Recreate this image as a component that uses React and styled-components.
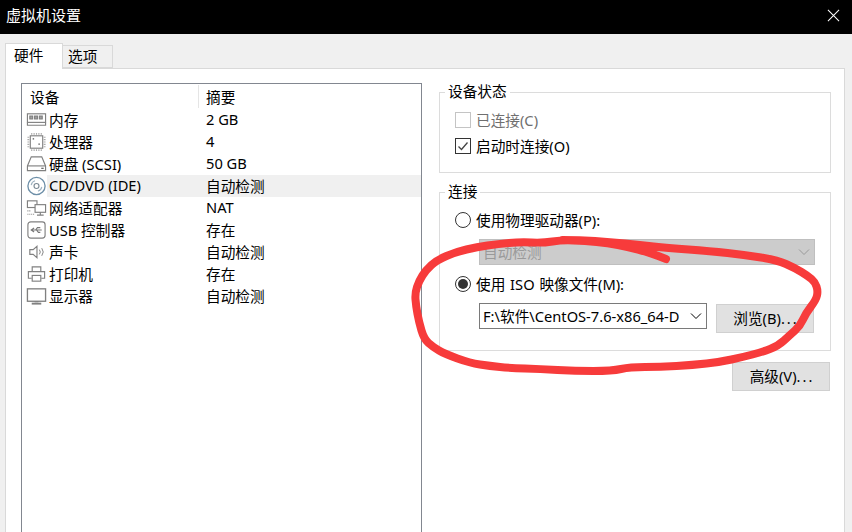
import React from 'react';
import styled, { createGlobalStyle } from 'styled-components';

const GlobalStyle = createGlobalStyle`
html, body {
  margin: 0;
  padding: 0;
  background: #f0f0f0;
}
body {
  font-family: "Noto Sans", "Noto Sans CJK SC", sans-serif;
  font-size: 14.67px;
  color: #000;
}
`;

const Window = styled.div`
position: relative;
width: 852px;
height: 532px;
overflow: hidden;
display: flex;
flex-direction: column;
background: #f0f0f0;
`;

const TitleBar = styled.div`
flex: none;
box-sizing: border-box;
height: 34px;
display: flex;
align-items: center;
justify-content: space-between;
padding: 0 12px 4px 6px;
background: #000;
color: #fff;
font-size: 15px;
`;

const TitleText = styled.span`
margin-bottom: 2px;
`;

const Body = styled.div`
flex: 1;
display: flex;
flex-direction: column;
padding: 9px 7px 0 5px;
min-height: 0;
`;

const TabRow = styled.div`
flex: none;
display: flex;
align-items: flex-end;
height: 25px;
position: relative;
z-index: 1;
`;

const Tab = styled.div`
display: flex;
align-items: center;
box-sizing: border-box;
width: ${p => (p.$active ? '58px' : '50px')};
height: ${p => (p.$active ? '26px' : '23px')};
margin-bottom: ${p => (p.$active ? '-1px' : '0')};
padding: ${p => (p.$active ? '0 0 5px 8px' : '0 0 2px 5px')};
background: ${p => (p.$active ? '#fff' : '#f0f0f0')};
border: 1px solid #d9d9d9;
border-bottom: ${p => (p.$active ? 'none' : '1px solid #d9d9d9')};
border-left: ${p => (p.$active ? '1px solid #d9d9d9' : 'none')};
`;

const Panel = styled.div`
flex: 1;
min-height: 0;
display: flex;
gap: 17px;
box-sizing: border-box;
padding: 14px 13px 0 15px;
background: #fff;
border: 1px solid #d9d9d9;
border-bottom: none;
`;

const DeviceList = styled.div`
flex: none;
box-sizing: border-box;
width: 401px;
height: 460px;
border: 1px solid #828790;
background: #fff;
`;

const ListHeader = styled.div`
display: flex;
height: 25px;
align-items: center;
`;

const HeaderCell = styled.div`
box-sizing: border-box;
height: 23px;
display: flex;
align-items: center;
width: ${p => p.$width};
padding-left: ${p => p.$pad};
padding-bottom: 1px;
border-right: ${p => (p.$divider ? '1px solid #e5e5e5' : 'none')};
`;

const Row = styled.div`
display: flex;
align-items: center;
height: 22px;
padding-left: 4px;
`;

const IconSlot = styled.div`
flex: none;
width: 21px;
height: 22px;
display: flex;
align-items: center;
justify-content: center;
`;

const RowBody = styled.div`
flex: 1;
box-sizing: border-box;
height: 22px;
display: flex;
align-items: center;
padding: 0 0 2px 2px;
background: ${p => (p.$selected ? '#f0f0f0' : 'transparent')};
`;

const NameCell = styled.div`
width: 157px;
white-space: nowrap;
`;

const SideColumn = styled.div`
flex: none;
width: 392px;
display: flex;
flex-direction: column;
`;

const Group = styled.fieldset`
box-sizing: border-box;
margin: 0 0 ${p => p.$gap || '0'};
padding: 6px 15px 0;
height: ${p => p.$height};
border: 1px solid #dcdcdc;
display: flex;
flex-direction: column;
min-width: 0;
`;

const GroupTitle = styled.legend`
margin-left: -10px;
padding: 0 3px 2px;
line-height: 16px;
`;

const OptionRow = styled.div`
display: flex;
align-items: center;
gap: 5px;
height: 26px;
color: ${p => (p.$disabled ? '#6f6f6f' : '#000')};
white-space: nowrap;
word-spacing: 1px;
`;

const OptionText = styled.span`
margin-bottom: 2px;
`;

const CheckBox = styled.div`
flex: none;
box-sizing: border-box;
width: 16px;
height: 16px;
display: flex;
align-items: center;
justify-content: center;
background: #fff;
border: 1px solid ${p => (p.$disabled ? '#c4c4c4' : '#333')};
`;

const Radio = styled.div`
flex: none;
box-sizing: border-box;
width: 16px;
height: 16px;
border-radius: 50%;
display: flex;
align-items: center;
justify-content: center;
background: #fff;
border: 1px solid #333;
`;

const RadioDot = styled.div`
width: 10px;
height: 10px;
border-radius: 50%;
background: #333;
`;

const Combo = styled.div`
box-sizing: border-box;
width: ${p => p.$width};
height: 26px;
display: flex;
align-items: center;
padding: 0 4px 0 3px;
background: ${p => (p.$disabled ? '#cccccc' : '#fff')};
border: 1px solid ${p => (p.$disabled ? '#bfbfbf' : '#7a7a7a')};
color: ${p => (p.$disabled ? '#9a9a9a' : '#000')};
`;

const ComboText = styled.div`
flex: 1;
min-width: 0;
margin: 0 8px 2px 0;
overflow: hidden;
white-space: nowrap;
`;

const FileRow = styled.div`
display: flex;
align-items: flex-start;
gap: 9px;
margin: 6px 0 0 24px;
`;

const DisabledCombo = styled.div`
margin: 6px 0 6px 24px;
`;

const Button = styled.div`
flex: none;
box-sizing: border-box;
width: 98px;
height: 29px;
display: flex;
align-items: center;
justify-content: center;
padding-bottom: 2px;
margin-top: ${p => p.$top || '1px'};
background: #e1e1e1;
border: 1px solid #d0d0d0;
`;

const Dots = styled.span`
letter-spacing: 2px;
margin-right: -2px;
`;

const ButtonRow = styled.div`
display: flex;
justify-content: flex-end;
padding-right: 1px;
`;

const Scribble = styled.svg`
position: absolute;
left: 0;
top: 0;
width: 852px;
height: 532px;
pointer-events: none;
`;

const Chevron = () => (
  <svg width="12" height="8" viewBox="0 0 12 8" fill="none" stroke="currentColor" strokeWidth="1">
    <path d="M1 1.5 L6 6.5 L11 1.5" />
  </svg>
);

const Tick = () => (
  <svg width="12" height="12" viewBox="0 0 12 12" fill="none" stroke="#444" strokeWidth="1.3">
    <path d="M1.5 6.5 L4.5 9.5 L10.5 2.5" />
  </svg>
);

const Close = () => (
  <svg width="13" height="13" viewBox="0 0 14 14" stroke="#fff" strokeWidth="1.1">
    <path d="M1 1 L13 13 M13 1 L1 13" />
  </svg>
);

const Glyph = ({ children }) => (
  <svg width="22" height="22" viewBox="0 0 22 22" fill="none" stroke="#808080" strokeWidth="1.2">
    {children}
  </svg>
);

const MemoryIcon = () => (
  <Glyph>
    <rect x="1.5" y="4.5" width="19" height="9" />
    <path d="M4 7h3v3H4z M9 7h3v3H9z M14 7h3v3h-3z" fill="#a0a0a0" />
    <path d="M1.5 13.5v3h19v-3" />
  </Glyph>
);

const CpuIcon = () => (
  <Glyph>
    <rect x="4.5" y="4.5" width="13" height="13" />
    <path d="M6 1.5v2M8.5 1.5v2M11 1.5v2M13.5 1.5v2M16 1.5v2M6 18.5v2M8.5 18.5v2M11 18.5v2M13.5 18.5v2M16 18.5v2M1.5 6h2M1.5 8.5h2M1.5 11h2M1.5 13.5h2M1.5 16h2M18.5 6h2M18.5 8.5h2M18.5 11h2M18.5 13.5h2M18.5 16h2" stroke="#aaa" />
    <path d="M7 7h1.5v1.5H7z M13 12.5h1.5V14H13z" fill="#555" stroke="none" />
  </Glyph>
);

const DiskIcon = () => (
  <Glyph>
    <path d="M5.5 3.5h11l4 9.5v5h-19v-5z" />
    <path d="M1.5 13h19" />
    <path d="M16 15.5h2.5" stroke="#555" />
  </Glyph>
);

const CdIcon = () => (
  <Glyph>
    <circle cx="11" cy="11" r="9" stroke="#6d8fa8" strokeWidth="1.4" />
    <circle cx="11" cy="11" r="2.6" stroke="#7c8a95" />
    <path d="M5.5 10a5.5 5.5 0 0 1 4-4.5 M16.5 12a5.5 5.5 0 0 1-4 4.5" stroke="#9fb3c2" />
  </Glyph>
);

const NetworkIcon = () => (
  <Glyph>
    <rect x="1.5" y="3.5" width="10" height="7" />
    <rect x="9.5" y="7.5" width="11" height="8" fill="#fff" />
    <path d="M15 15.5v3M11.5 18.5h7" />
    <path d="M1.5 17.5h8M1.5 14h4" strokeDasharray="1 1" />
  </Glyph>
);

const UsbIcon = () => (
  <Glyph>
    <rect x="2" y="2.5" width="18" height="17" rx="3" />
    <path d="M5.5 11h11M8.5 9 L5.5 11 L8.5 13 M10 11 L12 8.5h3 M11 11 L13 13.5h2" stroke="#777" />
  </Glyph>
);

const SoundIcon = () => (
  <Glyph>
    <path d="M4 8.5h3.5l4-3.5v12l-4-3.5H4z" />
    <path d="M14 8.5a4 4 0 0 1 0 5 M16.5 7a6.5 6.5 0 0 1 0 8" strokeWidth="1" />
  </Glyph>
);

const PrinterIcon = () => (
  <Glyph>
    <path d="M6.5 8.5v-5h9v5" />
    <path d="M6 15.5H2.5v-7h17v7H16" />
    <rect x="6.5" y="12.5" width="9" height="6" />
  </Glyph>
);

const MonitorIcon = () => (
  <Glyph>
    <rect x="1.5" y="3.5" width="19" height="13" strokeWidth="1.4" />
    <path d="M6 19h10" strokeWidth="2" />
    <path d="M9 17h4" />
  </Glyph>
);

const devices = [
  { name: '内存', summary: '2 GB', Icon: MemoryIcon },
  { name: '处理器', summary: '4', Icon: CpuIcon },
  { name: '硬盘 (SCSI)', summary: '50 GB', Icon: DiskIcon },
  { name: 'CD/DVD (IDE)', summary: '自动检测', Icon: CdIcon, selected: true },
  { name: '网络适配器', summary: 'NAT', Icon: NetworkIcon },
  { name: 'USB 控制器', summary: '存在', Icon: UsbIcon },
  { name: '声卡', summary: '自动检测', Icon: SoundIcon },
  { name: '打印机', summary: '存在', Icon: PrinterIcon },
  { name: '显示器', summary: '自动检测', Icon: MonitorIcon },
];

// hand-drawn ring, traced from the screenshot
const scribblePoints = [
  [666, 259], [648, 252], [628, 247], [608, 243], [585, 241], [562, 240], [543, 243], [520, 242],
  [498, 244], [477, 247], [456, 252], [437, 260], [426, 270], [419, 281], [415, 293], [416, 306],
  [419, 322], [424, 339], [433, 347], [445, 354], [470, 363], [490, 366], [510, 368], [540, 369],
  [575, 371], [612, 371], [630, 367], [660, 367], [693, 365], [720, 362], [743, 357], [762, 352],
  [778, 346], [790, 335], [800, 326], [806, 313], [816, 300], [818, 291], [815, 282], [808, 276],
  [795, 268], [777, 260], [745, 255], [710, 251], [667, 248], [640, 245], [610, 242], [580, 240], [545, 240],
];

// quadratic curves through the midpoints so the stroke has no hard corners
const smoothPath = points => {
  let d = `M${points[0].join(' ')}`;
  for (let i = 1; i < points.length - 1; i++) {
    const [x, y] = points[i];
    const [nx, ny] = points[i + 1];
    d += ` Q${x} ${y} ${(x + nx) / 2} ${(y + ny) / 2}`;
  }
  return d;
};

const App = () => (
  <Window>
    <GlobalStyle />
    <TitleBar>
      <TitleText>虚拟机设置</TitleText>
      <Close />
    </TitleBar>
    <Body>
      <TabRow>
        <Tab $active>硬件</Tab>
        <Tab>选项</Tab>
      </TabRow>
      <Panel>
        <DeviceList>
          <ListHeader>
            <HeaderCell $width="177px" $pad="8px" $divider>设备</HeaderCell>
            <HeaderCell $width="200px" $pad="7px">摘要</HeaderCell>
          </ListHeader>
          {devices.map(({ name, summary, Icon, selected }) => (
            <Row key={name}>
              <IconSlot><Icon /></IconSlot>
              <RowBody $selected={selected}>
                <NameCell>{name}</NameCell>
                <div>{summary}</div>
              </RowBody>
            </Row>
          ))}
        </DeviceList>
        <SideColumn>
          <Group $height="90px" $gap="10px">
            <GroupTitle>设备状态</GroupTitle>
            <OptionRow $disabled>
              <CheckBox $disabled />
              <OptionText>已连接(C)</OptionText>
            </OptionRow>
            <OptionRow>
              <CheckBox><Tick /></CheckBox>
              <OptionText>启动时连接(O)</OptionText>
            </OptionRow>
          </Group>
          <Group $height="168px" $gap="11px">
            <GroupTitle>连接</GroupTitle>
            <OptionRow>
              <Radio />
              <OptionText>使用物理驱动器(P):</OptionText>
            </OptionRow>
            <DisabledCombo>
              <Combo $width="336px" $disabled>
                <ComboText>自动检测</ComboText>
                <Chevron />
              </Combo>
            </DisabledCombo>
            <OptionRow>
              <Radio><RadioDot /></Radio>
              <OptionText>使用 ISO 映像文件(M):</OptionText>
            </OptionRow>
            <FileRow>
              <Combo $width="228px">
                <ComboText>F:\软件\CentOS-7.6-x86_64-D</ComboText>
                <Chevron />
              </Combo>
              <Button>浏览(B)<Dots>...</Dots></Button>
            </FileRow>
          </Group>
          <ButtonRow>
            <Button $top="0">高级(V)<Dots>...</Dots></Button>
          </ButtonRow>
        </SideColumn>
      </Panel>
    </Body>
    <Scribble viewBox="0 0 852 532" fill="none">
      <path
        d={smoothPath(scribblePoints)}
        stroke="#f73b3b"
        strokeWidth="8"
        strokeLinecap="round"
        strokeLinejoin="round"
      />
    </Scribble>
  </Window>
);

export default App;
